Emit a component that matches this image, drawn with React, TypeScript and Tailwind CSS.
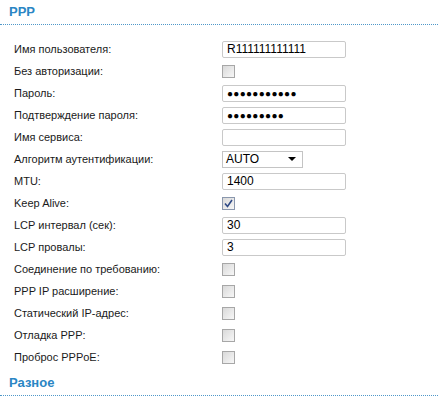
const rows: { label: string; kind: "text" | "check" | "password" | "select"; value?: string; checked?: boolean }[] = [
  { label: "Имя пользователя:", kind: "text", value: "R111111111111" },
  { label: "Без авторизации:", kind: "check" },
  { label: "Пароль:", kind: "password", value: "●●●●●●●●●●●" },
  { label: "Подтверждение пароля:", kind: "password", value: "●●●●●●●●●" },
  { label: "Имя сервиса:", kind: "text", value: "" },
  { label: "Алгоритм аутентификации:", kind: "select", value: "AUTO" },
  { label: "MTU:", kind: "text", value: "1400" },
  { label: "Keep Alive:", kind: "check", checked: true },
  { label: "LCP интервал (сек):", kind: "text", value: "30" },
  { label: "LCP провалы:", kind: "text", value: "3" },
  { label: "Соединение по требованию:", kind: "check" },
  { label: "PPP IP расширение:", kind: "check" },
  { label: "Статический IP-адрес:", kind: "check" },
  { label: "Отладка PPP:", kind: "check" },
  { label: "Проброс PPPoE:", kind: "check" },
];

function Check({ checked }: { checked?: boolean }) {
  return (
    <span
      className={
        "flex h-[13px] w-[13px] items-center justify-center border bg-gradient-to-br from-[#d9d9d9] to-[#f7f7f7] " +
        (checked ? "border-[#8a97ad]" : "border-[#a7a7a7]")
      }
    >
      {checked && (
        <svg width="9" height="9" viewBox="0 0 9 9" aria-hidden>
          <path d="M1 4.5 L3.5 7.5 L8 1" fill="none" stroke="#2f4a86" strokeWidth="1.6" />
        </svg>
      )}
    </span>
  );
}

function Field({ kind, value, checked }: { kind: string; value?: string; checked?: boolean }) {
  if (kind === "check") return <Check checked={checked} />;
  if (kind === "select")
    return (
      <div className="flex h-[17px] w-[81px] items-center justify-between border border-[#c4c4c4] bg-white pl-[3px] pr-[6px] text-[12px] text-black">
        <span>{value}</span>
        <span className="h-0 w-0 border-x-[4px] border-t-[4px] border-x-transparent border-t-black" />
      </div>
    );
  return (
    <div className="flex h-[17px] w-[124px] items-center rounded-[2px] border border-[#c9c9c9] bg-white px-[4px] text-[12px] text-black">
      {kind === "password" ? (
        <span className="text-[10px] tracking-[0.3px]">{value}</span>
      ) : (
        <span>{value}</span>
      )}
    </div>
  );
}

function Section({ title }: { title: string }) {
  return (
    <div className="flex h-[25px] items-center border-b border-dotted border-[#4f98c9] pl-[9px] text-[13px] font-bold text-[#2a86c4]">
      {title}
    </div>
  );
}

export default function App() {
  return (
    <div className="h-[396px] w-[438px] bg-white font-['Liberation_Sans',Tahoma,sans-serif] text-[11px] text-[#1a1a1a]">
      <Section title="PPP" />
      <div className="flex flex-col pb-[3px] pt-[13px]">
        {rows.map((r) => (
          <div key={r.label} className="flex h-[22px] items-center">
            <span className="w-[222px] pl-[14px]">{r.label}</span>
            <Field kind={r.kind} value={r.value} checked={r.checked} />
          </div>
        ))}
      </div>
      <Section title="Разное" />
    </div>
  );
}
